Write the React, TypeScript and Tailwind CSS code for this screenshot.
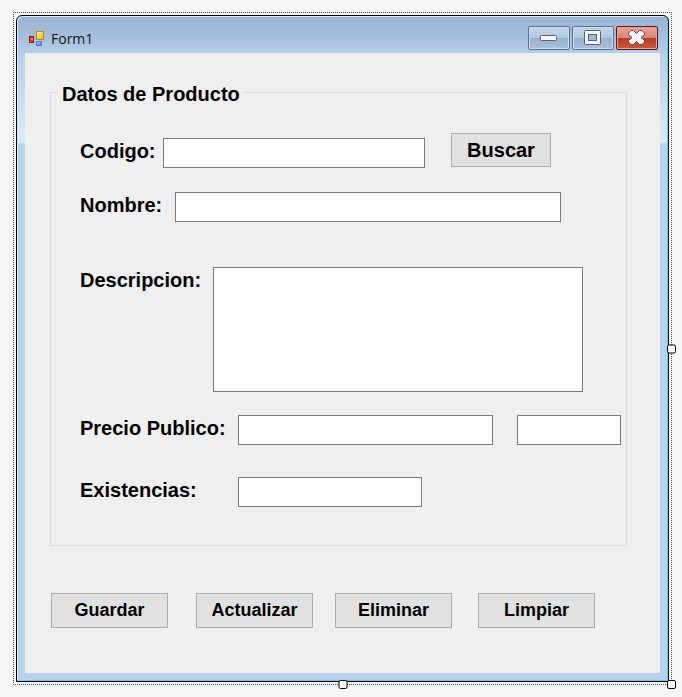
import type { ReactNode } from "react";

const label = "shrink-0 whitespace-nowrap text-[20px] leading-[27px] font-bold";
const box = "block h-[30px] min-w-0 rounded-none border border-[#7a7a7a] bg-white px-1 outline-none";
const action =
  "h-[35px] w-[117px] shrink-0 border border-[#adadad] bg-[#e1e1e1] text-[18px] font-bold text-black";

function FormIcon() {
  return (
    <svg width="16" height="16" viewBox="0 0 16 16" aria-hidden="true">
      <defs>
        <linearGradient id="gold" x1="0" y1="0" x2="1" y2="1">
          <stop offset="0" stopColor="#fff0a0" />
          <stop offset="1" stopColor="#f0b400" />
        </linearGradient>
        <linearGradient id="blue" x1="0" y1="0" x2="1" y2="1">
          <stop offset="0" stopColor="#a9cdfb" />
          <stop offset="1" stopColor="#3f78dd" />
        </linearGradient>
      </defs>
      <rect x="0.5" y="5.5" width="4" height="6" fill="#c8402c" stroke="#8a1d15" />
      <rect x="2" y="7" width="2" height="2" fill="#f08c74" />
      <rect x="7.5" y="0.5" width="7" height="8" fill="url(#gold)" stroke="#b08a20" />
      <rect x="7.5" y="10.5" width="5" height="4" fill="url(#blue)" stroke="#4c7cd8" />
    </svg>
  );
}

function CaptionButton({ name, close, children }: { name: string; close?: boolean; children: ReactNode }) {
  const tone = close
    ? "border-[#5a1722] bg-linear-[180deg,#e8a79c_0%,#d98375_48%,#b93a22_50%,#c8583f_100%] shadow-[inset_0_0_0_1px_#e3a496]"
    : "border-[#5d7290] bg-linear-[180deg,#c3d5e9_0%,#b4c9e1_48%,#95afcd_50%,#a9c2de_100%] shadow-[inset_0_0_0_1px_#cddced]";
  return (
    <button
      type="button"
      aria-label={name}
      className={`flex h-6 w-[42px] items-center justify-center rounded-[2px] border ${tone}`}
    >
      {children}
    </button>
  );
}

function Handle({ place }: { place: string }) {
  return <span className={`absolute size-[9px] rounded-[2px] border border-black bg-white ${place}`} />;
}

export default function App() {
  return (
    <div className="min-h-screen bg-[#f6f6f6] pt-3 pr-[10px] pb-3 pl-[13px] font-['Liberation_Sans',Arial,sans-serif] text-black">
      <div className="relative border border-dotted border-[#555] p-[2px]">
        <div className="overflow-hidden rounded-t-[6px] border border-black bg-linear-[180deg,#99b4d1_0px,#a3bcd9_18px,#b7cfe8_38px,#dceaf7_126px,#b9d1ea_128px] pr-2 pb-2 pl-2 shadow-[inset_-1px_-1px_0_#5fd0ec,inset_1px_1px_0_#dfeaf5]">
          <header className="flex h-[37px] items-start justify-between pt-[10px] pr-[2px] pl-1">
            <div className="flex items-center gap-[6px] pt-1">
              <FormIcon />
              <h1 className="font-['Open_Sans','Noto_Sans',sans-serif] text-[14px] leading-[18px] text-[#101820]">
                Form1
              </h1>
            </div>
            <div className="flex gap-[2px]">
              <CaptionButton name="Minimizar">
                <svg width="18" height="8" viewBox="0 0 18 8" aria-hidden="true">
                  <rect x="0.5" y="1.5" width="16" height="5" rx="1" fill="#f8f8f8" stroke="#57606e" />
                </svg>
              </CaptionButton>
              <CaptionButton name="Maximizar">
                <svg width="18" height="16" viewBox="0 0 18 16" aria-hidden="true">
                  <rect x="0.5" y="0.5" width="16" height="14" rx="1" fill="#f4f6f8" stroke="#57606e" />
                  <rect x="4.5" y="4.5" width="8" height="6" fill="#9fb7d3" stroke="#57606e" />
                </svg>
              </CaptionButton>
              <CaptionButton name="Cerrar" close>
                <svg width="18" height="16" viewBox="0 0 18 16" aria-hidden="true">
                  <path
                    d="M3 0.5H5.5L8.5 3.5L11.5 0.5H14L16.5 3V4.5L13 7.5L16.5 10.5V12L14 14.5H11.5L8.5 11.5L5.5 14.5H3L0.5 12V10.5L4 7.5L0.5 4.5V3Z"
                    fill="#f4f4f4"
                    stroke="#5c4450"
                    strokeLinejoin="round"
                  />
                </svg>
              </CaptionButton>
            </div>
          </header>

          <form className="bg-[#efefef] pt-[27px] pr-[33px] pb-[45px] pl-[25px]">
            <fieldset className="min-w-0 border border-[#dcdcdc] pb-[38px] pl-[29px]">
              <legend className="-ml-[22px] px-1 pt-1 text-[20px] leading-5 font-bold">Datos de Producto</legend>

              <div className="mt-[29px] flex h-[35px] pr-[75px]">
                <div className="flex min-w-0 flex-1 self-end">
                  <label htmlFor="codigo" className={`${label} w-[83px]`}>Codigo:</label>
                  <input id="codigo" type="text" className={`${box} flex-1`} />
                </div>
                <button
                  type="button"
                  className="ml-[26px] h-[34px] w-[100px] shrink-0 border border-[#adadad] bg-[#e1e1e1] text-[20px] font-bold"
                >
                  Buscar
                </button>
              </div>

              <div className="mt-6 flex pr-[65px]">
                <label htmlFor="nombre" className={`${label} w-[95px]`}>Nombre:</label>
                <input id="nombre" type="text" className={`${box} flex-1`} />
              </div>

              <div className="mt-[45px] flex pr-[43px]">
                <label htmlFor="descripcion" className={`${label} w-[133px]`}>Descripcion:</label>
                <textarea
                  id="descripcion"
                  className="block h-[125px] min-w-0 flex-1 resize-none rounded-none border border-[#7a7a7a] bg-white px-1 outline-none"
                />
              </div>

              <div className="mt-[23px] flex pr-[5px]">
                <label htmlFor="precio" className={`${label} w-[158px]`}>Precio Publico:</label>
                <input id="precio" type="text" className={`${box} flex-1`} />
                <input type="text" aria-label="Precio" className={`${box} ml-6 w-[104px]`} />
              </div>

              <div className="mt-8 flex pr-[204px]">
                <label htmlFor="existencias" className={`${label} w-[158px]`}>Existencias:</label>
                <input id="existencias" type="text" className={`${box} flex-1`} />
              </div>
            </fieldset>

            <div className="mt-[47px] flex pl-px">
              <button type="button" className={`${action} mr-7`}>Guardar</button>
              <button type="button" className={`${action} mr-[22px]`}>Actualizar</button>
              <button type="button" className={`${action} mr-[26px]`}>Eliminar</button>
              <button type="button" className={action}>Limpiar</button>
            </div>
          </form>
        </div>

        <Handle place="top-1/2 -right-[5px] -translate-y-1/2" />
        <Handle place="-bottom-[5px] left-1/2 -translate-x-1/2" />
        <Handle place="-right-[5px] -bottom-[5px]" />
      </div>
    </div>
  );
}
